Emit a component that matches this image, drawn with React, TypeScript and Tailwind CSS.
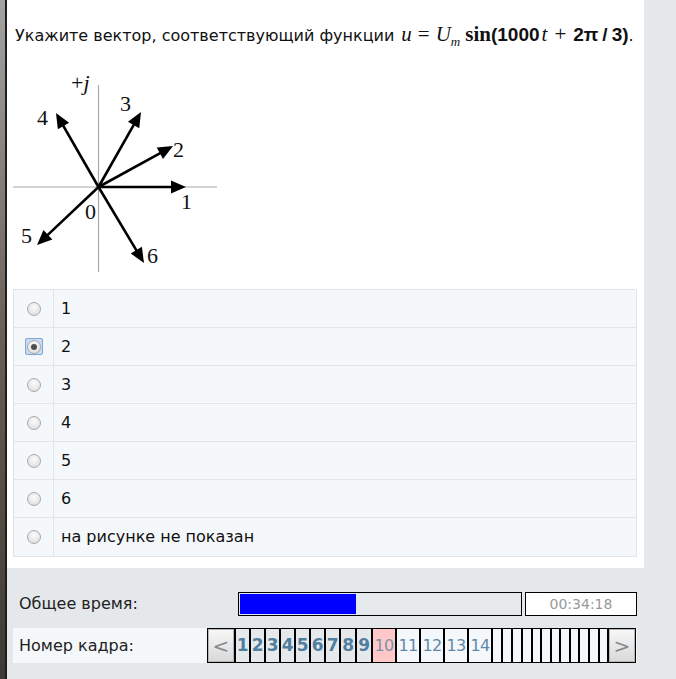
import React from "react";

const O = { x: 98.5, y: 187 };

function Arrow({ tx, ty }: { tx: number; ty: number }) {
  const dx = tx - O.x;
  const dy = ty - O.y;
  const len = Math.hypot(dx, dy);
  const ux = dx / len;
  const uy = dy / len;
  const bx = tx - ux * 15;
  const by = ty - uy * 15;
  const px = -uy * 6.5;
  const py = ux * 6.5;
  return (
    <g>
      <line x1={O.x} y1={O.y} x2={bx + ux * 2} y2={by + uy * 2} stroke="#000" strokeWidth={2.6} />
      <polygon points={`${tx},${ty} ${bx + px},${by + py} ${bx - px},${by - py}`} fill="#000" />
    </g>
  );
}

function Diagram() {
  const cls = "font-['Liberation_Serif',serif] text-[22px]";
  return (
    <svg width={210} height={218} viewBox="12 68 210 218" className="block">
      <rect x={12} y={68} width={210} height={218} fill="#fff" />
      <line x1={13} y1={187} x2={217} y2={187} stroke="#a8a8a8" strokeWidth={1.2} />
      <line x1={98.5} y1={85} x2={98.5} y2={272} stroke="#a8a8a8" strokeWidth={1.2} />
      <Arrow tx={186} ty={187} />
      <Arrow tx={173} ty={146} />
      <Arrow tx={141} ty={112} />
      <Arrow tx={56} ty={113} />
      <Arrow tx={37} ty={245} />
      <Arrow tx={144} ty={263} />
      <text x={71} y={90} className={cls} fill="#111">
        +<tspan fontStyle="italic">j</tspan>
      </text>
      <text x={37} y={125} className={cls} fill="#111">4</text>
      <text x={120} y={111} className={cls} fill="#111">3</text>
      <text x={173} y={157} className={cls} fill="#111">2</text>
      <text x={181} y={209} className={cls} fill="#111">1</text>
      <text x={85} y={219} className={cls} fill="#111">0</text>
      <text x={21} y={243} className={cls} fill="#111">5</text>
      <text x={147} y={263} className={cls} fill="#111">6</text>
    </svg>
  );
}

function Radio({ checked }: { checked?: boolean }) {
  const circle = (
    <div className="w-[14px] h-[14px] rounded-full border border-[#a9a9a9] bg-[radial-gradient(circle_at_50%_35%,#fbfbfb,#d9d9d9)] flex items-center justify-center">
      {checked && <div className="w-[6px] h-[6px] rounded-full bg-[#4d4d4d]" />}
    </div>
  );
  if (checked) {
    return (
      <div className="w-[18px] h-[17px] border border-[#7fa4d6] rounded-[2px] bg-[#c9dcf3] flex items-center justify-center">
        {circle}
      </div>
    );
  }
  return circle;
}

const options = ["1", "2", "3", "4", "5", "6", "на рисунке не показан"];

const boldCells = [
  { n: 1, w: "w-[15px]" },
  { n: 2, w: "w-[15px]" },
  { n: 3, w: "w-[15px]" },
  { n: 4, w: "w-[15px]" },
  { n: 5, w: "w-[15px]" },
  { n: 6, w: "w-[15px]" },
  { n: 7, w: "w-[15px]" },
  { n: 8, w: "w-[16px]" },
  { n: 9, w: "w-[16px]" },
];
const empties = [
  "w-[10px]", "w-[10px]", "w-[10px]", "w-[10px]", "w-[9px]", "w-[10px]",
  "w-[9px]", "w-[10px]", "w-[9px]", "w-[10px]", "w-[10px]", "w-[9px]",
];

const SERIF = "font-['Liberation_Serif',serif] leading-none";
const ARIALB = "font-['Liberation_Sans',Arial,sans-serif] font-bold leading-none";

export default function App() {
  return (
    <div className="w-[676px] h-[679px] flex bg-[#e5e8eb] overflow-hidden font-['DejaVu_Sans',Verdana,sans-serif]">
      <div className="w-[5px] h-full bg-linear-to-b from-[#a3a3a3] via-[#6a5e55] to-[#3e3934]" />
      <div className="w-[2px] h-full bg-[#1e1e1e]" />
      <div className="w-[637px] flex flex-col">
        <div className="bg-white pl-[6px] pr-[7px] pt-[24px] pb-[11px]">
          <div className="ml-[2px] h-[24px] text-[16px] leading-6 text-[#111] whitespace-nowrap">
            Укажите вектор, соответствующий функции
            <span className={`${SERIF} italic text-[21px] ml-[7px]`}>u</span>
            <span className={`${SERIF} text-[21px] mx-[6px]`}>=</span>
            <span className={`${SERIF} italic text-[21px]`}>U</span>
            <span className={`${SERIF} italic text-[13px] relative top-[5px]`}>m</span>
            <span className={`${SERIF} font-bold text-[21px] ml-[5px]`}>sin</span>
            <span className={`${ARIALB} text-[19px]`}>(1000</span>
            <span className={`${SERIF} italic text-[21px] ml-[2px]`}>t</span>
            <span className={`${SERIF} text-[21px] mx-[7px]`}>+</span>
            <span className={`${ARIALB} text-[19px]`}>2π</span>
            <span className={`${ARIALB} text-[19px] mx-[4px]`}>/</span>
            <span className={`${ARIALB} text-[19px]`}>3)</span>
            <span className="text-[16px]">.</span>
          </div>
          <div className="mt-[20px] -ml-[1px]">
            <Diagram />
          </div>
          <div className="mt-[3px] border border-[#e1e5e9] bg-[#f5f8fb]">
            {options.map((o, i) => (
              <div
                key={o}
                className={i < options.length - 1 ? "flex h-[38px] border-b border-[#e1e5e9]" : "flex h-[38px]"}
              >
                <div className="w-[40px] border-r border-[#e1e5e9] flex items-center justify-center">
                  <Radio checked={i === 1} />
                </div>
                <div className="flex items-center pl-[7px] text-[16px] text-[#111]">{o}</div>
              </div>
            ))}
          </div>
        </div>
        <div className="pl-[6px] pr-[7px] pt-[24px]">
          <div className="flex items-center h-[24px]">
            <div className="w-[225px] pl-[6px] text-[16px] text-[#222]">Общее время:</div>
            <div className="w-[284px] h-[24px] border border-black bg-[#e6e9ec] p-[1px]">
              <div className="h-full w-[41.5%] bg-[#0000ff]" />
            </div>
            <div className="ml-[3px] w-[112px] h-[24px] border border-black bg-white flex items-center justify-center text-[14px] text-[#999]">
              00:34:18
            </div>
          </div>
          <div className="mt-[12px] h-[35px] bg-[#f5f8fb] flex items-center">
            <div className="w-[194px] pl-[6px] text-[16px] text-[#222]">Номер кадра:</div>
            <div className="w-[429px] h-[35px] border border-black flex bg-[#f5f8fb]">
              <div className="w-[26px] h-full border border-[#b5b5b5] bg-linear-to-b from-[#f7f7f7] to-[#d9d9d9] flex items-center justify-center text-[20px] text-[#8a8a8a] leading-none">
                &lt;
              </div>
              {boldCells.map((c) => (
                <div
                  key={c.n}
                  className={`${c.w} h-full border-l-2 border-black bg-[#e6e9ec] flex items-center justify-center text-[17px] font-bold text-[#4f7ea0] tracking-[-0.5px]`}
                >
                  {c.n}
                </div>
              ))}
              <div className="w-[24px] h-full border-l-2 border-black bg-[#ffc8c8] flex items-center justify-center text-[16px] text-[#7b93ab] tracking-[-0.8px]">
                10
              </div>
              {[11, 12, 13, 14].map((n) => (
                <div
                  key={n}
                  className="w-[24px] h-full border-l-2 border-black bg-[#f5f8fb] flex items-center justify-center text-[16px] text-[#5f88a8] tracking-[-0.8px]"
                >
                  {n}
                </div>
              ))}
              {empties.map((w, i) => (
                <div key={i} className={`${w} h-full border-l-2 border-black bg-[#f5f8fb]`} />
              ))}
              <div className="w-[28px] h-full border-l-2 border-black">
                <div className="w-full h-full border border-[#b5b5b5] bg-linear-to-b from-[#f7f7f7] to-[#d9d9d9] flex items-center justify-center text-[20px] text-[#8a8a8a] leading-none">
                  &gt;
                </div>
              </div>
            </div>
          </div>
        </div>
      </div>
    </div>
  );
}
